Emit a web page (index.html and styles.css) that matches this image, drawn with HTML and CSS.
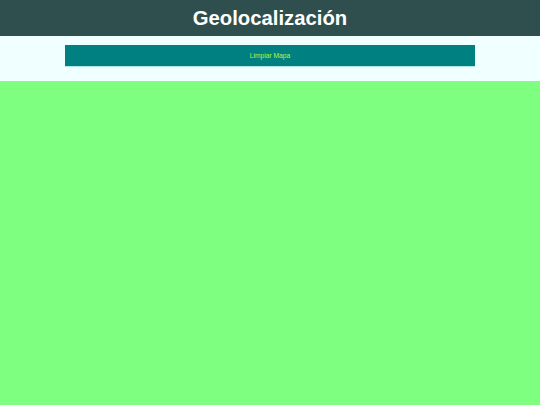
FILE: index.html
```html
<!DOCTYPE html>
<html lang="es">
<head>
<meta charset="utf-8">
<title>Geolocalización</title>
<link rel="stylesheet" href="styles.css">
</head>
<body>
<header class="top">
  <h1 class="title">Geolocalización</h1>
</header>
<div class="controls">
  <button class="clear-btn" type="button">Limpiar Mapa</button>
</div>
<div class="map"></div>
</body>
</html>
```
FILE: styles.css
```css
html, body {
  margin: 0;
  padding: 0;
  height: 100%;
}
body {
  display: flex;
  flex-direction: column;
  font-family: "Liberation Sans", Arial, sans-serif;
  background: #f0ffff;
}
.top {
  background: #2f4f4f;
  height: 36px;
  display: flex;
  align-items: center;
  justify-content: center;
}
.title {
  margin: 0;
  color: #ffffff;
  font-size: 20.3px;
  font-weight: bold;
  line-height: 36px;
}
.controls {
  background: #f0ffff;
  padding: 9px 65px 15px;
  display: flex;
}
.clear-btn {
  flex: 1;
  height: 21px;
  border: none;
  background: #008080;
  color: #adff2f;
  font-family: "Liberation Sans", Arial, sans-serif;
  font-size: 6.7px;
  padding: 0;
  box-shadow: 0 1px 0 #b0e8e8;
}
.map {
  flex: 1;
  background: #7fff80;
}
```
